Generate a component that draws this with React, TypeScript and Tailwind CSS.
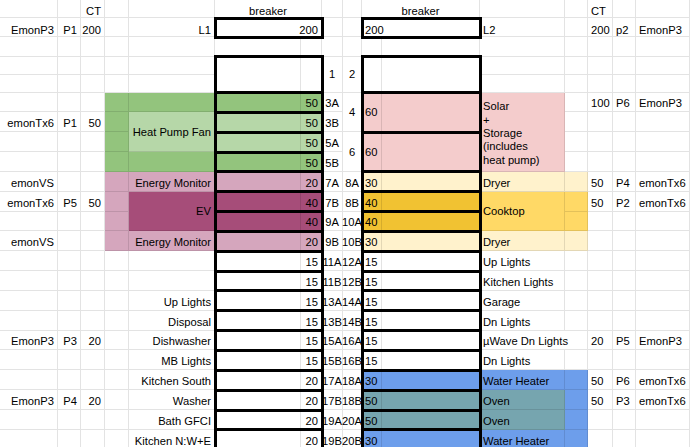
import clsx from 'clsx';

// Spreadsheet columns A..P and their widths live in the grid template below
const COLS = 'ABCDEFGHIJKLMNOP';

interface Cell {
  r: number;
  c: string;
  rs?: number;
  cs?: number;
  t?: string;
  bg?: string;
  a?: 'l' | 'r' | 'c';
  m?: boolean;
  wrap?: boolean;
}

const G1 = 'bg-[#93c47d]';
const G2 = 'bg-[#b6d7a8]';
const PK = 'bg-[#d5a6bd]';
const MG = 'bg-[#a64d79]';
const RD = 'bg-[#f4cccc]';
const Y3 = 'bg-[#fff2cc]';
const Y1 = 'bg-[#ffd966]';
const YD = 'bg-[#f1c232]';
const BL = 'bg-[#6d9eeb]';
const TL = 'bg-[#76a5af]';

const cells: Cell[] = [
  // header
  { r: 0, c: 'C', t: 'CT', a: 'r' },
  { r: 0, c: 'F', cs: 2, t: 'breaker', a: 'c' },
  { r: 0, c: 'J', cs: 2, t: 'breaker', a: 'c' },
  { r: 0, c: 'N', t: 'CT' },
  // mains
  { r: 1, c: 'A', t: 'EmonP3', a: 'r' },
  { r: 1, c: 'B', t: 'P1', a: 'r' },
  { r: 1, c: 'C', t: '200', a: 'r' },
  { r: 1, c: 'E', t: 'L1', a: 'r' },
  { r: 1, c: 'F', cs: 2, t: '200', a: 'r' },
  { r: 1, c: 'J', cs: 2, t: '200' },
  { r: 1, c: 'L', t: 'L2' },
  { r: 1, c: 'N', t: '200' },
  { r: 1, c: 'O', t: 'p2' },
  { r: 1, c: 'P', t: 'EmonP3' },
  // slots 1 / 2
  { r: 3, c: 'F', rs: 2 },
  { r: 3, c: 'G', rs: 2 },
  { r: 3, c: 'H', rs: 2, t: '1', a: 'c', m: true },
  { r: 3, c: 'I', rs: 2, t: '2', a: 'c', m: true },
  { r: 3, c: 'J', rs: 2 },
  { r: 3, c: 'K', rs: 2 },
  // heat pump / solar
  { r: 5, c: 'D', bg: G1 },
  { r: 5, c: 'E', bg: G1 },
  { r: 5, c: 'F', bg: G1 },
  { r: 5, c: 'G', bg: G1, t: '50', a: 'r' },
  { r: 5, c: 'H', t: '3A', a: 'c' },
  { r: 5, c: 'I', rs: 2, t: '4', a: 'c', m: true },
  { r: 5, c: 'J', rs: 2, bg: RD, t: '60', m: true },
  { r: 5, c: 'K', rs: 2, bg: RD },
  { r: 5, c: 'L', rs: 4, bg: RD, t: 'Solar\n+\nStorage\n(includes\nheat pump)', m: true, wrap: true },
  { r: 5, c: 'N', t: '100' },
  { r: 5, c: 'O', t: 'P6' },
  { r: 5, c: 'P', t: 'EmonP3' },
  { r: 6, c: 'A', t: 'emonTx6', a: 'r' },
  { r: 6, c: 'B', t: 'P1', a: 'r' },
  { r: 6, c: 'C', t: '50', a: 'r' },
  { r: 6, c: 'D', bg: G1 },
  { r: 6, c: 'E', rs: 2, bg: G2, t: 'Heat Pump Fan', a: 'r', m: true },
  { r: 6, c: 'F', bg: G2 },
  { r: 6, c: 'G', bg: G2, t: '50', a: 'r' },
  { r: 6, c: 'H', t: '3B', a: 'c' },
  { r: 7, c: 'D', bg: G1 },
  { r: 7, c: 'F', bg: G2 },
  { r: 7, c: 'G', bg: G2, t: '50', a: 'r' },
  { r: 7, c: 'H', t: '5A', a: 'c' },
  { r: 7, c: 'I', rs: 2, t: '6', a: 'c', m: true },
  { r: 7, c: 'J', rs: 2, bg: RD, t: '60', m: true },
  { r: 7, c: 'K', rs: 2, bg: RD },
  { r: 8, c: 'D', bg: G1 },
  { r: 8, c: 'E', bg: G1 },
  { r: 8, c: 'F', bg: G1 },
  { r: 8, c: 'G', bg: G1, t: '50', a: 'r' },
  { r: 8, c: 'H', t: '5B', a: 'c' },
  // energy monitor / EV / dryer / cooktop
  { r: 9, c: 'A', t: 'emonVS', a: 'r' },
  { r: 9, c: 'D', bg: PK },
  { r: 9, c: 'E', bg: PK, t: 'Energy Monitor', a: 'r' },
  { r: 9, c: 'F', bg: PK },
  { r: 9, c: 'G', bg: PK, t: '20', a: 'r' },
  { r: 9, c: 'H', t: '7A', a: 'c' },
  { r: 9, c: 'I', t: '8A', a: 'c' },
  { r: 9, c: 'J', bg: Y3, t: '30' },
  { r: 9, c: 'K', bg: Y3 },
  { r: 9, c: 'L', bg: Y3, t: 'Dryer' },
  { r: 9, c: 'M', bg: Y3 },
  { r: 9, c: 'N', t: '50' },
  { r: 9, c: 'O', t: 'P4' },
  { r: 9, c: 'P', t: 'emonTx6' },
  { r: 10, c: 'A', t: 'emonTx6', a: 'r' },
  { r: 10, c: 'B', t: 'P5', a: 'r' },
  { r: 10, c: 'C', t: '50', a: 'r' },
  { r: 10, c: 'D', bg: PK },
  { r: 10, c: 'E', rs: 2, bg: MG, t: 'EV', a: 'r', m: true },
  { r: 10, c: 'F', bg: MG },
  { r: 10, c: 'G', bg: MG, t: '40', a: 'r' },
  { r: 10, c: 'H', t: '7B', a: 'c' },
  { r: 10, c: 'I', t: '8B', a: 'c' },
  { r: 10, c: 'J', bg: YD, t: '40' },
  { r: 10, c: 'K', bg: YD },
  { r: 10, c: 'L', rs: 2, bg: Y1, t: 'Cooktop', m: true },
  { r: 10, c: 'M', bg: Y1 },
  { r: 10, c: 'N', t: '50' },
  { r: 10, c: 'O', t: 'P2' },
  { r: 10, c: 'P', t: 'emonTx6' },
  { r: 11, c: 'D', bg: PK },
  { r: 11, c: 'F', bg: MG },
  { r: 11, c: 'G', bg: MG, t: '40', a: 'r' },
  { r: 11, c: 'H', t: '9A', a: 'c' },
  { r: 11, c: 'I', t: '10A', a: 'c' },
  { r: 11, c: 'J', bg: YD, t: '40' },
  { r: 11, c: 'K', bg: YD },
  { r: 11, c: 'M', bg: Y1 },
  { r: 12, c: 'A', t: 'emonVS', a: 'r' },
  { r: 12, c: 'D', bg: PK },
  { r: 12, c: 'E', bg: PK, t: 'Energy Monitor', a: 'r' },
  { r: 12, c: 'F', bg: PK },
  { r: 12, c: 'G', bg: PK, t: '20', a: 'r' },
  { r: 12, c: 'H', t: '9B', a: 'c' },
  { r: 12, c: 'I', t: '10B', a: 'c' },
  { r: 12, c: 'J', bg: Y3, t: '30' },
  { r: 12, c: 'K', bg: Y3 },
  { r: 12, c: 'L', bg: Y3, t: 'Dryer' },
  { r: 12, c: 'M', bg: Y3 },
  // CT rows further down
  { r: 17, c: 'A', t: 'EmonP3', a: 'r' },
  { r: 17, c: 'B', t: 'P3', a: 'r' },
  { r: 17, c: 'C', t: '20', a: 'r' },
  { r: 17, c: 'N', t: '20' },
  { r: 17, c: 'O', t: 'P5' },
  { r: 17, c: 'P', t: 'EmonP3' },
  { r: 19, c: 'N', t: '50' },
  { r: 19, c: 'O', t: 'P6' },
  { r: 19, c: 'P', t: 'emonTx6' },
  { r: 20, c: 'A', t: 'EmonP3', a: 'r' },
  { r: 20, c: 'B', t: 'P4', a: 'r' },
  { r: 20, c: 'C', t: '20', a: 'r' },
  { r: 20, c: 'N', t: '50' },
  { r: 20, c: 'O', t: 'P3' },
  { r: 20, c: 'P', t: 'emonTx6' },
];

// rows 13..22: plain 15/20 A breakers
const leftLoads = ['', '', 'Up Lights', 'Disposal', 'Dishwasher', 'MB Lights', 'Kitchen South', 'Washer', 'Bath GFCI', 'Kitchen N:W+E'];
const rightLoads = ['Up Lights', 'Kitchen Lights', 'Garage', 'Dn Lights', 'µWave Dn Lights', 'Dn Lights', 'Water Heater', 'Oven', 'Oven', 'Water Heater'];
const rightAmps = ['15', '15', '15', '15', '15', '15', '30', '50', '50', '30'];
const rightBg = ['', '', '', '', '', '', BL, TL, TL, BL];

leftLoads.forEach((load, i) => {
  const r = 13 + i;
  const n = 11 + 2 * Math.floor(i / 2);
  const ab = i % 2 === 0 ? 'A' : 'B';
  if (load) cells.push({ r, c: 'E', t: load, a: 'r' });
  cells.push({ r, c: 'G', t: i < 6 ? '15' : '20', a: 'r' });
  cells.push({ r, c: 'H', t: `${n}${ab}`, a: 'c' });
  cells.push({ r, c: 'I', t: `${n + 1}${ab}`, a: 'c' });
  cells.push({ r, c: 'J', t: rightAmps[i], bg: rightBg[i] || undefined });
  cells.push({ r, c: 'K', bg: rightBg[i] || undefined });
  if (i === 4) {
    cells.push({ r, c: 'L', cs: 2, t: rightLoads[i] });
  } else {
    cells.push({ r, c: 'L', t: rightLoads[i], bg: rightBg[i] || undefined });
    if (i >= 6) cells.push({ r, c: 'M', bg: BL });
  }
});

const ROWS = 23;

// fill every uncovered cell so gridlines show everywhere
const taken = new Set<string>();
cells.forEach((cell) => {
  const c0 = COLS.indexOf(cell.c);
  for (let r = cell.r; r < cell.r + (cell.rs ?? 1); r++)
    for (let c = c0; c < c0 + (cell.cs ?? 1); c++) taken.add(`${r}:${c}`);
});
const allCells: Cell[] = [...cells];
for (let r = 0; r < ROWS; r++)
  for (let c = 0; c < COLS.length; c++)
    if (!taken.has(`${r}:${c}`)) allCells.push({ r, c: COLS[c] });

interface Box { r: number; rs?: number; side: 'L' | 'R' }

const boxes: Box[] = [
  { r: 1, side: 'L' },
  { r: 1, side: 'R' },
  { r: 3, rs: 2, side: 'L' },
  { r: 3, rs: 2, side: 'R' },
  { r: 5, rs: 2, side: 'R' },
  { r: 7, rs: 2, side: 'R' },
];
for (let r = 5; r < ROWS; r++) boxes.push({ r, side: 'L' });
for (let r = 9; r < ROWS; r++) boxes.push({ r, side: 'R' });

function SheetCell({ cell }: { cell: Cell }) {
  const col = COLS.indexOf(cell.c) + 1;
  const justify = cell.a === 'r' ? 'justify-end' : cell.a === 'c' ? 'justify-center' : 'justify-start';
  return (
    <div
      className={clsx(
        'flex border-r border-b border-[rgba(0,0,0,0.11)] px-[3px]',
        cell.m ? 'items-center' : 'items-end',
        cell.wrap ? 'whitespace-pre-line leading-[13.3px] pt-[4px]' : 'whitespace-nowrap leading-[12px]',
        !cell.m && cell.r >= 2 && 'pb-[2px]',
        justify,
        cell.bg,
      )}
      style={{ gridRow: `${cell.r + 1} / span ${cell.rs ?? 1}`, gridColumn: `${col} / span ${cell.cs ?? 1}` }}
    >
      {cell.t}
    </div>
  );
}

export default function App() {
  return (
    <div className="w-[690px] h-[447px] overflow-hidden bg-white text-black text-[11.2px] font-['Liberation_Sans',Arial,sans-serif]">
      <div className="grid grid-cols-[58px_23px_24px_24px_86px_86px_21px_21px_19px_20px_98px_85px_23px_25px_23px_54px] grid-rows-[18px_19px_19.5px_18px_18px_repeat(18,19.85px)]">
        {allCells.map((cell) => (
          <SheetCell key={`${cell.r}-${cell.c}`} cell={cell} />
        ))}
        {boxes.map((b) => (
          <div
            key={`${b.side}-${b.r}`}
            className="-m-[1.5px] border-[3px] border-black z-10 pointer-events-none"
            style={{ gridRow: `${b.r + 1} / span ${b.rs ?? 1}`, gridColumn: b.side === 'L' ? '6 / span 2' : '10 / span 2' }}
          />
        ))}
      </div>
    </div>
  );
}
